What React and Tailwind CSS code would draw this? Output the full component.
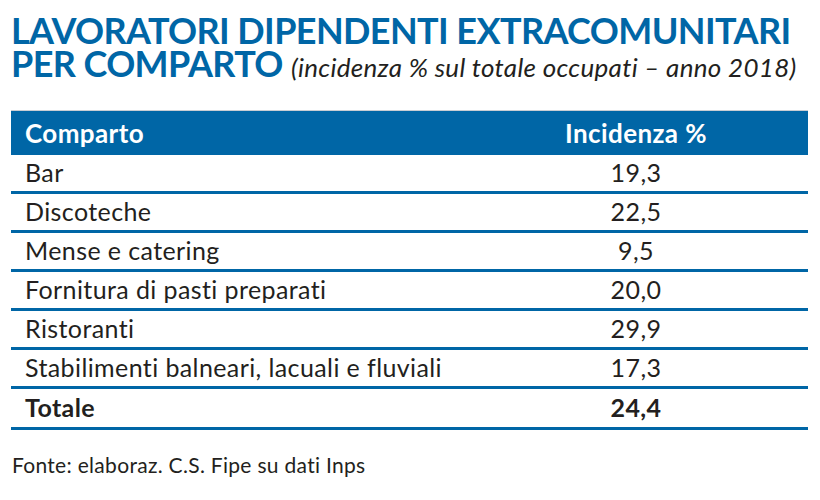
const rows = [
  ["Bar", "19,3"],
  ["Discoteche", "22,5"],
  ["Mense e catering", "9,5"],
  ["Fornitura di pasti preparati", "20,0"],
  ["Ristoranti", "29,9"],
  ["Stabilimenti balneari, lacuali e fluviali", "17,3"],
];

export default function App() {
  return (
    <div className="w-[820px] h-[500px] bg-white text-[#231f20] font-['Lato',sans-serif] pt-[14px]">
      <h1 className="px-[11px] text-[#0066a6] font-bold text-[36px] leading-[33px] tracking-[-0.6px]">
        LAVORATORI DIPENDENTI EXTRACOMUNITARI
        <br />
        PER COMPARTO{" "}
        <span className="italic font-normal text-[26px] text-[#231f20] tracking-[0.3px]">
          (incidenza % sul totale occupati – anno 2018)
        </span>
      </h1>

      <div className="ml-[11px] w-[797px] mt-[26px] border-t border-[#c9cdd3]">
        <div className="flex items-center h-[44px] bg-[#0066a6] text-white font-bold text-[26px] tracking-[0.4px]">
          <div className="flex-1 pl-[14px]">Comparto</div>
          <div className="w-[340px] text-center pr-[4px]">Incidenza %</div>
        </div>
        {rows.map(([name, value]) => (
          <div
            key={name}
            className="flex items-center h-[39px] border-b-[3px] border-[#0066a6] text-[25px] tracking-[0.4px]"
          >
            <div className="flex-1 pl-[14px]">{name}</div>
            <div className="w-[340px] text-center pr-[4px]">{value}</div>
          </div>
        ))}
        <div className="flex items-center h-[41px] border-b-[3px] border-[#0066a6] text-[25px] font-bold tracking-[0.4px]">
          <div className="flex-1 pl-[14px]">Totale</div>
          <div className="w-[340px] text-center pr-[4px]">24,4</div>
        </div>
      </div>

      <p className="px-[12px] mt-[19px] text-[21px] tracking-[0.3px]">
        Fonte: elaboraz. C.S. Fipe su dati Inps
      </p>
    </div>
  );
}
